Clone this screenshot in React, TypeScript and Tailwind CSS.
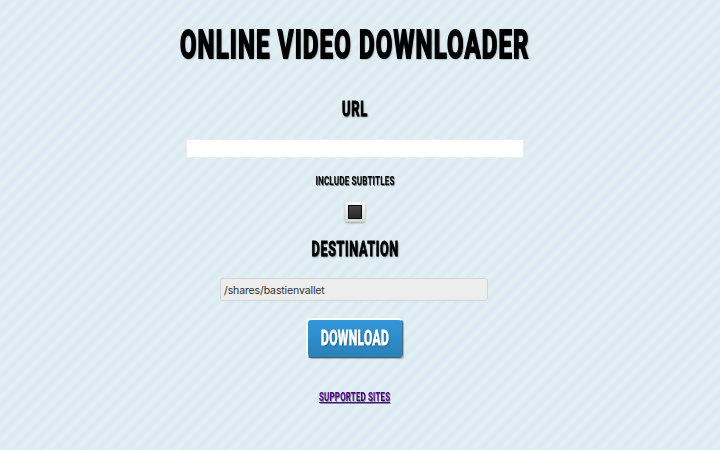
import { useLayoutEffect, useRef } from "react";

// Squeezes a line of capitals into a condensed poster width.
function Condensed({ text, width, className }: { text: string; width: number; className: string }) {
  const ref = useRef<HTMLSpanElement>(null);
  useLayoutEffect(() => {
    const el = ref.current;
    if (el) el.style.transform = `scaleX(${width / el.offsetWidth})`;
  }, [text, width]);
  return (
    <span ref={ref} className={`inline-block whitespace-nowrap font-bold font-[Roboto,sans-serif] ${className}`}>
      {text}
    </span>
  );
}

export default function App() {
  return (
    <main className="flex h-[450px] w-[720px] flex-col items-center overflow-hidden bg-[#deebf3] bg-[repeating-linear-gradient(135deg,#e1eff3_0px,#e1eff3_4px,#dceaf3_5px,#dceaf3_9px,#e1eff3_10px)] pr-[10px] text-black">
      <h1 className="mt-[21px] flex h-[48px] justify-center">
        <Condensed text="ONLINE VIDEO DOWNLOADER" width={350} className="text-[39px] leading-[48px] tracking-[2px] [-webkit-text-stroke:1.9px_black] [text-shadow:1px_1px_2px_#000c]" />
      </h1>
      <h2 className="mt-[28px] flex h-[24px] justify-center">
        <Condensed text="URL" width={26} className="text-[20px] leading-[24px] tracking-[1px] [-webkit-text-stroke:0.8px_black] [text-shadow:1px_1px_2px_#000a]" />
      </h2>
      <input aria-label="URL" className="mt-[18px] h-[19px] w-[338px] border border-[#ececec] bg-white outline-none" />
      <label htmlFor="subtitles" className="mt-[15px] flex h-[16px] justify-center">
        <Condensed text="INCLUDE SUBTITLES" width={79} className="text-[13px] leading-[16px] tracking-[0.2px] [text-shadow:1px_1px_1px_#0008]" />
      </label>
      <button id="subtitles" className="mt-[13px] flex size-[20px] shrink-0 items-center justify-center rounded-[2px] bg-linear-to-b from-[#fafaf5] to-[#d5d8cb] shadow-[0_1px_2px_#0005]">
        <span className="size-[14px] border border-[#08080c] bg-linear-to-b from-[#45464b] to-[#29292d]" />
      </button>
      <h2 className="mt-[15px] flex h-[24px] justify-center">
        <Condensed text="DESTINATION" width={87} className="text-[20px] leading-[24px] tracking-[1px] [-webkit-text-stroke:0.8px_black] [text-shadow:1px_1px_2px_#000a]" />
      </h2>
      <div className="mt-[17px] mr-[2px] flex h-[23px] w-[268px] shrink-0 items-center rounded-[3px] border border-[#d2d5d7] bg-[#ededed] pl-[3px] font-[Inter,sans-serif] text-[10.5px] tracking-[-0.12px] text-[#303030]">
        <span className="pt-[2px]">/shares/bastienvallet</span>
      </div>
      <button className="mt-[18px] flex h-[39px] w-[96px] shrink-0 items-center justify-center rounded-[4px] border border-t-white border-r-[#4b6b85] border-b-[#4b5c69] border-l-white bg-linear-to-b from-[#3498db] to-[#2980b9] bg-origin-border pb-[2px] text-white shadow-[-1px_-1px_0_#fffc,1px_1px_1px_#0004]">
        <Condensed text="DOWNLOAD" width={68} className="text-[21px] leading-[24px] tracking-[0.5px] [-webkit-text-stroke:0.8px_white] [text-shadow:1px_1px_2px_#0008]" />
      </button>
      <a href="#" className="mt-[30px] flex h-[18px] justify-center text-[#4b0082]">
        <Condensed text="SUPPORTED SITES" width={71} className="text-[13px] leading-[18px] tracking-[0.2px] underline [text-shadow:1px_1px_1px_#0006]" />
      </a>
    </main>
  );
}
